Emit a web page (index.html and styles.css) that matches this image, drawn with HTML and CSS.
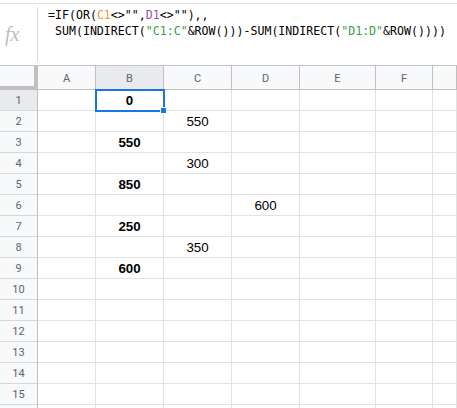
FILE: index.html
```html
<!DOCTYPE html>
<html>
<head>
<meta charset="utf-8">
<link rel="stylesheet" href="styles.css">
</head>
<body>
<div class="topline"></div>
<div class="formula-bar">
  <div class="fx">fx</div>
  <div class="sep"></div>
  <div class="formula"><div class="fline">=IF(OR(<span class="r1">C1</span>&lt;&gt;"",<span class="r2">D1</span>&lt;&gt;""),,</div><div class="fline"> SUM(INDIRECT(<span class="str">"C1:C"</span>&amp;ROW()))-SUM(INDIRECT(<span class="str">"D1:D"</span>&amp;ROW())))</div></div>
</div>
<div class="grid">
  <div class="corner"></div><div class="ch">A</div><div class="ch sel">B</div><div class="ch">C</div><div class="ch">D</div><div class="ch">E</div><div class="ch">F</div><div class="ch"></div>

  <div class="rh sel">1</div><div class="c"></div><div class="c b active">0<span class="handle"></span></div><div class="c"></div><div class="c"></div><div class="c"></div><div class="c"></div><div class="c"></div>
  <div class="rh">2</div><div class="c"></div><div class="c"></div><div class="c">550</div><div class="c"></div><div class="c"></div><div class="c"></div><div class="c"></div>
  <div class="rh">3</div><div class="c"></div><div class="c b">550</div><div class="c"></div><div class="c"></div><div class="c"></div><div class="c"></div><div class="c"></div>
  <div class="rh">4</div><div class="c"></div><div class="c"></div><div class="c">300</div><div class="c"></div><div class="c"></div><div class="c"></div><div class="c"></div>
  <div class="rh">5</div><div class="c"></div><div class="c b">850</div><div class="c"></div><div class="c"></div><div class="c"></div><div class="c"></div><div class="c"></div>
  <div class="rh">6</div><div class="c"></div><div class="c"></div><div class="c"></div><div class="c">600</div><div class="c"></div><div class="c"></div><div class="c"></div>
  <div class="rh">7</div><div class="c"></div><div class="c b">250</div><div class="c"></div><div class="c"></div><div class="c"></div><div class="c"></div><div class="c"></div>
  <div class="rh">8</div><div class="c"></div><div class="c"></div><div class="c">350</div><div class="c"></div><div class="c"></div><div class="c"></div><div class="c"></div>
  <div class="rh">9</div><div class="c"></div><div class="c b">600</div><div class="c"></div><div class="c"></div><div class="c"></div><div class="c"></div><div class="c"></div>
  <div class="rh">10</div><div class="c"></div><div class="c"></div><div class="c"></div><div class="c"></div><div class="c"></div><div class="c"></div><div class="c"></div>
  <div class="rh">11</div><div class="c"></div><div class="c"></div><div class="c"></div><div class="c"></div><div class="c"></div><div class="c"></div><div class="c"></div>
  <div class="rh">12</div><div class="c"></div><div class="c"></div><div class="c"></div><div class="c"></div><div class="c"></div><div class="c"></div><div class="c"></div>
  <div class="rh">13</div><div class="c"></div><div class="c"></div><div class="c"></div><div class="c"></div><div class="c"></div><div class="c"></div><div class="c"></div>
  <div class="rh">14</div><div class="c"></div><div class="c"></div><div class="c"></div><div class="c"></div><div class="c"></div><div class="c"></div><div class="c"></div>
  <div class="rh">15</div><div class="c"></div><div class="c"></div><div class="c"></div><div class="c"></div><div class="c"></div><div class="c"></div><div class="c"></div>
  <div class="rh"></div><div class="c"></div><div class="c"></div><div class="c"></div><div class="c"></div><div class="c"></div><div class="c"></div><div class="c"></div>
</div>
</body>
</html>
```

FILE: styles.css
```css
* { box-sizing: border-box; }
html, body { margin: 0; padding: 0; background: #fff; overflow: hidden; width: 457px; height: 408px; }
body { font-family: "Liberation Sans", Arial, sans-serif; }

.topline { height: 4px; border-bottom: 1px solid #e2e2e2; }

.formula-bar {
  display: flex;
  height: 62px;
  border-bottom: 1px solid #c4c4c4;
}
.fx {
  width: 37px;
  padding-left: 5px;
  display: flex;
  align-items: center;
  font-family: "Liberation Serif", serif;
  font-style: italic;
  font-size: 20px;
  color: #bdbdbd;
}
.sep {
  width: 1px;
  background: #dadce0;
  margin: 3px 0 3px 0;
}
.formula {
  padding: 3px 0 0 10px;
  font-family: "DejaVu Sans Mono", monospace;
  font-size: 11.6px;
  line-height: 16px;
  color: #000;
  white-space: pre;
}
.r1 { color: #f29a1f; }
.r2 { color: #9b4fb8; }
.str { color: #38a043; }

.grid {
  display: grid;
  grid-template-columns: 38px 58px 68px 68px 68px 76px 57px 1fr;
  grid-template-rows: 24px;
  grid-auto-rows: 21px;
}
.corner {
  background: #f8f9fa;
  border-right: 4px solid #c0c0c0;
  border-bottom: 4px solid #c0c0c0;
}
.ch {
  background: #f8f9fa;
  border-right: 1px solid #c0c0c0;
  border-bottom: 1px solid #c0c0c0;
  display: flex;
  align-items: center;
  justify-content: center;
  font-family: Roboto, "Liberation Sans", sans-serif;
  font-size: 11px;
  color: #5f6368;
  padding-top: 1px;
}
.rh {
  background: #f8f9fa;
  border-right: 1px solid #c0c0c0;
  border-bottom: 1px solid #d6d6d6;
  display: flex;
  align-items: center;
  justify-content: center;
  font-family: Roboto, "Liberation Sans", sans-serif;
  font-size: 11px;
  color: #5f6368;
}
.sel { background: #e8eaed; }
.c {
  border-right: 1px solid #e2e2e2;
  border-bottom: 1px solid #e2e2e2;
  display: flex;
  align-items: flex-end;
  justify-content: center;
  padding-bottom: 1px;
  font-size: 13.33px;
  line-height: 16px;
  color: #000;
}
.b { font-weight: bold; }
.active {
  position: relative;
  outline: 2px solid #1a73e8;
  outline-offset: -1px;
}
.handle {
  position: absolute;
  right: -4px;
  bottom: -4px;
  width: 7px;
  height: 7px;
  background: #1a73e8;
  border: 1px solid #fff;
}
```
